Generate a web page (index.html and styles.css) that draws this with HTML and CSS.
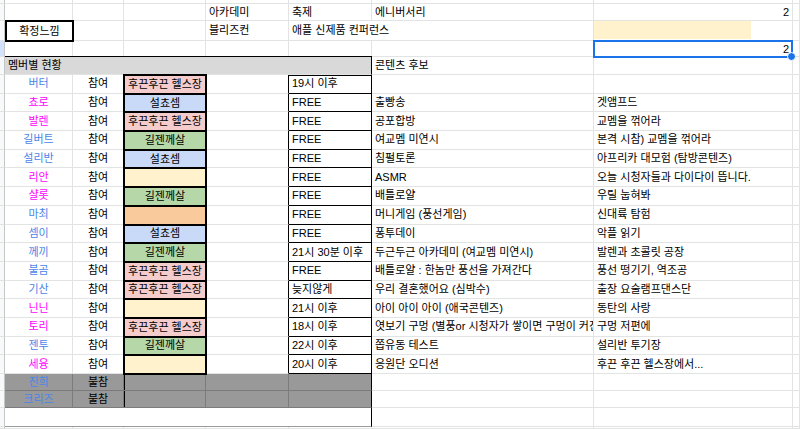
FILE: index.html
```html
<!DOCTYPE html>
<html lang="ko">
<head>
<meta charset="utf-8">
<title>멤버별 현황</title>
<link rel="stylesheet" href="styles.css">
</head>
<body>
<div class="sheet">
  <!-- row 0 (partial) -->
  <div class="c rh"></div><div class="c"></div><div class="c"></div><div class="c"></div><div class="c"></div><div class="c"></div><div class="c"></div><div class="c"></div><div class="c"></div>
  <!-- row 1 -->
  <div class="c rh"></div><div class="c"></div><div class="c"></div><div class="c"></div><div class="c">아카데미</div><div class="c">축제</div><div class="c">에니버서리</div><div class="c r">2</div><div class="c"></div>
  <!-- row 2 -->
  <div class="c rh"></div><div class="c ctr boxed">확정느낌</div><div class="c"></div><div class="c"></div><div class="c">블리즈컨</div><div class="c spill">애플 신제품 컨퍼런스</div><div class="c"></div><div class="c nopad"><div class="partfill"></div></div><div class="c"></div>
  <!-- row 3 -->
  <div class="c rh sel"></div><div class="c"></div><div class="c"></div><div class="c"></div><div class="c"></div><div class="c"></div><div class="c"></div><div class="c r selcell">2<span class="handle"></span></div><div class="c"></div>
  <!-- row 4 -->
  <div class="c rh"></div><div class="c hdr">멤버별 현황</div><div class="c">콘텐츠 후보</div><div class="c"></div><div class="c"></div>
  <!-- rows 5-20 -->
  <div class="c rh"></div><div class="c ctr nb">버터</div><div class="c ctr">참여</div><div class="c ctr grp pink">후끈후끈 헬스장</div><div class="c d"></div><div class="c e etop">19시 이후</div><div class="c"></div><div class="c"></div><div class="c"></div>
  <div class="c rh"></div><div class="c ctr nm">쵸로</div><div class="c ctr">참여</div><div class="c ctr grp blue">설쵸셈</div><div class="c d"></div><div class="c e">FREE</div><div class="c">출빵송</div><div class="c">겟앰프드</div><div class="c"></div>
  <div class="c rh"></div><div class="c ctr nm">발렌</div><div class="c ctr">참여</div><div class="c ctr grp pink">후끈후끈 헬스장</div><div class="c d"></div><div class="c e">FREE</div><div class="c">공포합방</div><div class="c">교멤을 꺾어라</div><div class="c"></div>
  <div class="c rh"></div><div class="c ctr nb">길버트</div><div class="c ctr">참여</div><div class="c ctr grp green">길젠께살</div><div class="c d"></div><div class="c e">FREE</div><div class="c">여교멤 미연시</div><div class="c">본격 시참) 교멤을 꺾어라</div><div class="c"></div>
  <div class="c rh"></div><div class="c ctr nb">설리반</div><div class="c ctr">참여</div><div class="c ctr grp blue">설쵸셈</div><div class="c d"></div><div class="c e">FREE</div><div class="c">침펄토론</div><div class="c">아프리카 대모험 (탐방콘텐즈)</div><div class="c"></div>
  <div class="c rh"></div><div class="c ctr nm">리안</div><div class="c ctr">참여</div><div class="c ctr grp yel"></div><div class="c d"></div><div class="c e">FREE</div><div class="c">ASMR</div><div class="c">오늘 시청자들과 다이다이 뜹니다.</div><div class="c"></div>
  <div class="c rh"></div><div class="c ctr nm">샬롯</div><div class="c ctr">참여</div><div class="c ctr grp green">길젠께살</div><div class="c d"></div><div class="c e">FREE</div><div class="c">배틀로얄</div><div class="c">우릴 눕혀봐</div><div class="c"></div>
  <div class="c rh"></div><div class="c ctr nb">마최</div><div class="c ctr">참여</div><div class="c ctr grp org"></div><div class="c d"></div><div class="c e">FREE</div><div class="c">머니게임 (풍선게임)</div><div class="c">신대륙 탐험</div><div class="c"></div>
  <div class="c rh"></div><div class="c ctr nb">셈이</div><div class="c ctr">참여</div><div class="c ctr grp blue">설쵸셈</div><div class="c d"></div><div class="c e">FREE</div><div class="c">퐁투데이</div><div class="c">악플 읽기</div><div class="c"></div>
  <div class="c rh"></div><div class="c ctr nb">께끼</div><div class="c ctr">참여</div><div class="c ctr grp green">길젠께살</div><div class="c d"></div><div class="c e">21시 30분 이후</div><div class="c">두근두근 아카데미 (여교멤 미연시)</div><div class="c">발렌과 초콜릿 공장</div><div class="c"></div>
  <div class="c rh"></div><div class="c ctr nb">불곰</div><div class="c ctr">참여</div><div class="c ctr grp pink">후끈후끈 헬스장</div><div class="c d"></div><div class="c e">FREE</div><div class="c">배틀로얄 : 한놈만 풍선을 가져간다</div><div class="c">풍선 떵기기, 역조공</div><div class="c"></div>
  <div class="c rh"></div><div class="c ctr nb">기산</div><div class="c ctr">참여</div><div class="c ctr grp pink">후끈후끈 헬스장</div><div class="c d"></div><div class="c e">늦지않게</div><div class="c">우리 결혼했어요 (심박수)</div><div class="c">출장 요술램프댄스단</div><div class="c"></div>
  <div class="c rh"></div><div class="c ctr nm">닌닌</div><div class="c ctr">참여</div><div class="c ctr grp yel"></div><div class="c d"></div><div class="c e">21시 이후</div><div class="c">아이 아이 아이 (애국콘텐즈)</div><div class="c">동탄의 사랑</div><div class="c"></div>
  <div class="c rh"></div><div class="c ctr nm">토리</div><div class="c ctr">참여</div><div class="c ctr grp pink">후끈후끈 헬스장</div><div class="c d"></div><div class="c e">18시 이후</div><div class="c clip">엿보기 구멍 (별풍or 시청자가 쌓이면 구멍이 커진다)</div><div class="c">구멍 저편에</div><div class="c"></div>
  <div class="c rh"></div><div class="c ctr nb">젠투</div><div class="c ctr">참여</div><div class="c ctr grp green">길젠께살</div><div class="c d"></div><div class="c e">22시 이후</div><div class="c">쫍유동 테스트</div><div class="c">설리반 투기장</div><div class="c"></div>
  <div class="c rh"></div><div class="c ctr nm">세융</div><div class="c ctr">참여</div><div class="c ctr grp yel"></div><div class="c d"></div><div class="c e">20시 이후</div><div class="c">응원단 오디션</div><div class="c">후끈 후끈 헬스장에서...</div><div class="c"></div>
  <!-- rows 21-22 -->
  <div class="c rh"></div><div class="c ctr gray nb">진희</div><div class="c ctr gray">불참</div><div class="c gray gc"></div><div class="c gray"></div><div class="c gray ge"></div><div class="c"></div><div class="c"></div><div class="c"></div>
  <div class="c rh"></div><div class="c ctr gray nb">크리즈</div><div class="c ctr gray">불참</div><div class="c gray gc"></div><div class="c gray"></div><div class="c gray ge"></div><div class="c"></div><div class="c"></div><div class="c"></div>
  <!-- row 23 -->
  <div class="c rh"></div><div class="c endrow"></div><div class="c"></div><div class="c"></div><div class="c"></div>
  <!-- row 24 (partial) -->
  <div class="c rh"></div><div class="c"></div><div class="c"></div><div class="c"></div><div class="c"></div><div class="c"></div><div class="c"></div><div class="c"></div><div class="c"></div>
</div>
</body>
</html>
```

FILE: styles.css
```css
html, body {
  margin: 0;
  padding: 0;
  background: #ffffff;
}

body {
  width: 800px;
  height: 429px;
  overflow: hidden;
  font-family: "Liberation Sans", Arial, "Noto Sans CJK KR", sans-serif;
  font-size: 11px;
  color: #000000;
}

.sheet {
  display: grid;
  grid-template-columns: 5px 68px 51px 82px 83px 83px 222px 199px 7px;
  grid-template-rows: 4px 17px 20px 16px 18px repeat(16, 18.6875px) 17px 17px 19px 2px;
  width: 800px;
  height: 429px;
}

.c {
  box-sizing: border-box;
  border-right: 1px solid #e2e3e3;
  border-bottom: 1px solid #e2e3e3;
  display: flex;
  align-items: center;
  padding: 0 3px;
  white-space: nowrap;
  overflow: hidden;
  min-width: 0;
  line-height: 1;
}

.rh {
  padding: 0;
  background: #f8f9fa;
  border-right-color: #c4c7c5;
  border-bottom-color: #e2e3e3;
}

.rh.sel {
  background: #d3e3fd;
}

.ctr { justify-content: center; }
.r { justify-content: flex-end; }
.nopad { padding: 0; align-items: flex-start; }

.boxed {
  border: 2px solid #000000;
  margin: -1px -1px -1px 0;
  z-index: 2;
}

.spill {
  overflow: visible;
  border-right: none;
  z-index: 3;
}

.partfill {
  width: 157px;
  height: 18px;
  background: #fff2cc;
}

.selcell {
  position: relative;
  overflow: visible;
  border: 2px solid #1a73e8;
  margin: -1px 0 -1px -1px;
  padding-right: 2px;
  z-index: 4;
}

.handle {
  position: absolute;
  right: -5px;
  bottom: -5px;
  width: 7px;
  height: 7px;
  border-radius: 50%;
  background: #1a73e8;
  border: 1px solid #ffffff;
}

.hdr {
  grid-column: span 5;
  background: #d9d9d9;
  border-top: 1px solid #000000;
  border-right: 1px solid #000000;
  margin-top: -1px;
}

.grp {
  border: 2px solid #000000;
  margin: -1px;
  z-index: 2;
  padding: 0 1px;
}

.pink { background: #f4cccc; }
.blue { background: #c9daf8; }
.green { background: #b6d7a8; }
.yel { background: #fff2cc; }
.org { background: #f9cb9c; }

.d { border-right-color: #000000; }

.e {
  border-right-color: #000000;
  border-bottom-color: #000000;
}

.etop { box-shadow: inset 0 1px 0 #000000; }

.nb { color: #4a86e8; }
.nm { color: #ff00ff; }

.gray {
  background: #999999;
  border-right-color: #7b7b7b;
  border-bottom-color: #7b7b7b;
}

.gc { box-shadow: inset 1px 0 0 #000000; }
.ge { border-right-color: #000000; }

.endrow {
  grid-column: span 5;
  border-right: 1px solid #000000;
  border-bottom: 1px solid #9a9a9a;
}

.clip { padding-right: 0; }
```
